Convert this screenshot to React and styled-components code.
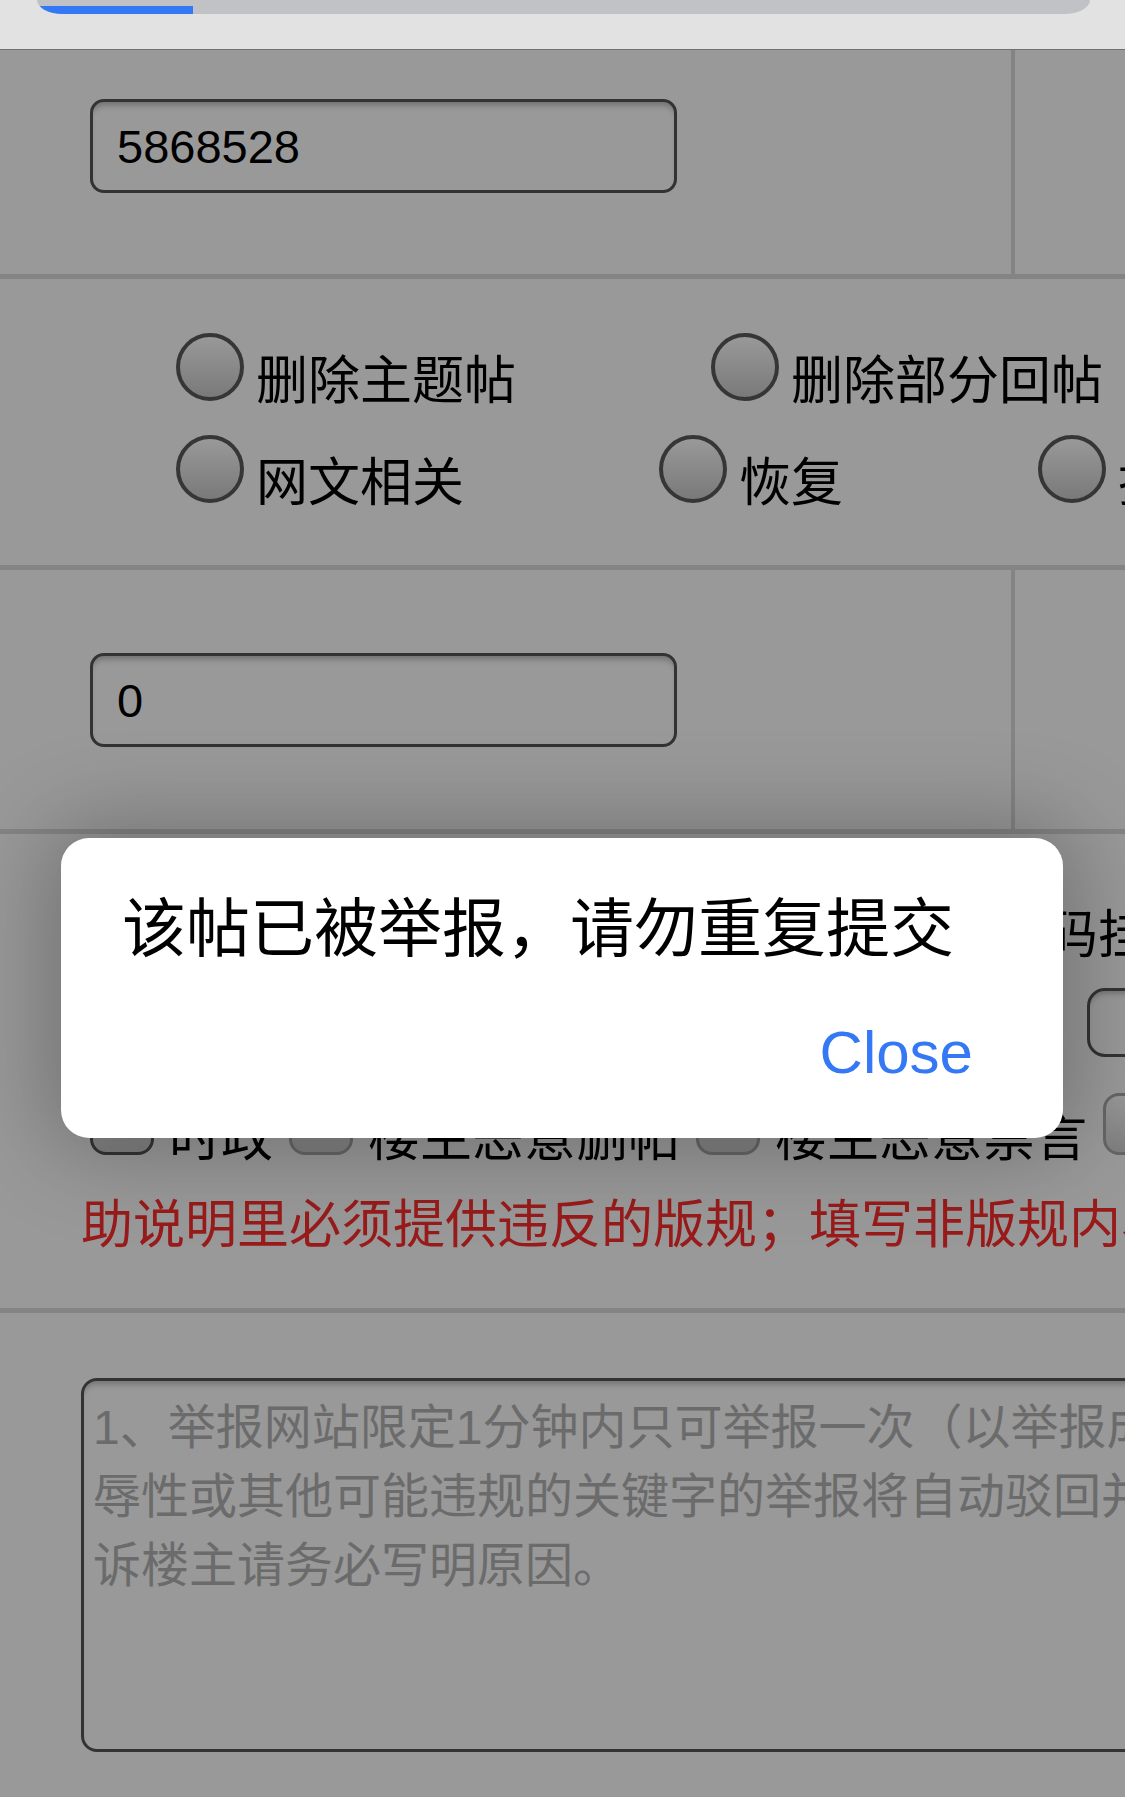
import styled, { createGlobalStyle } from "styled-components";

const GlobalStyle = createGlobalStyle`
  html, body {
    margin: 0;
    padding: 0;
    overflow: hidden;
    background: #e2e2e2;
  }
  body {
    font-family: "Noto Sans CJK SC", "Liberation Sans", sans-serif;
  }
`;

const TopBar = styled.div`
  height: 49px;
  background: #e2e2e2;
  border-bottom: 1px solid #707070;
`;

const UrlPill = styled.div`
  height: 14px;
  margin: 0 35px 0 37px;
  background: #c1c2c6;
  border-radius: 0 0 26px 26px / 0 0 14px 14px;
  overflow: hidden;
  display: flex;
  align-items: flex-end;
`;

const Progress = styled.div`
  height: 8px;
  background: #3478f6;
`;

const PageArea = styled.div`
  position: relative;
  height: 1747px;
  overflow: hidden;
  background: #fff;
`;

const Form = styled.div`
  width: 1400px;
  display: flex;
  flex-direction: column;
`;

const Row = styled.div`
  height: ${(p) => p.$h}px;
  border-bottom: ${(p) => (p.$last ? "none" : "5px solid #dcdcdc")};
  display: ${(p) => (p.$split ? "grid" : "block")};
  grid-template-columns: 1015px 1fr;
`;

const Cell = styled.div`
  padding: ${(p) => p.$top}px 0 0 90px;
  border-right: 4px solid #dcdcdc;
`;

const TextInput = styled.input`
  box-sizing: border-box;
  width: 587px;
  height: 94px;
  border: 3px solid #555;
  border-radius: 14px;
  padding: 0 0 0 24px;
  background: #fff;
  box-shadow: inset 0 7px 6px -4px rgba(0, 0, 0, 0.28);
  font-family: "Liberation Sans", sans-serif;
  font-size: 47px;
  color: #000;
  outline: none;
`;

const RadioGroup = styled.div`
  display: flex;
  flex-wrap: wrap;
  column-gap: 195px;
  row-gap: 32px;
  padding: 54px 0 0 176px;
`;

const OptionItem = styled.label`
  display: flex;
  align-items: flex-start;
  gap: ${(p) => p.$gap}px;
`;

const RadioMark = styled.input.attrs({ type: "radio" })`
  appearance: none;
  margin: 0;
  flex: none;
  width: 68px;
  height: 68px;
  border-radius: 50%;
  border: 4px solid #5a5a5a;
  box-sizing: border-box;
  background: linear-gradient(#ffffff, #cbcbcb);
`;

const CheckMark = styled.input.attrs({ type: "checkbox" })`
  appearance: none;
  margin: 0;
  flex: none;
  width: 64px;
  height: 62px;
  border-radius: 16px;
  border: 3px solid ${(p) => (p.$dark ? "#555" : "#aaa")};
  box-sizing: border-box;
  background: linear-gradient(#ffffff, #d4d4d4);
`;

const OptionText = styled.span`
  font-size: 52px;
  line-height: 52px;
  color: #000;
  white-space: nowrap;
  margin-top: ${(p) => p.$top}px;
`;

const ReportBlock = styled.div`
  display: flex;
  flex-direction: column;
  align-items: flex-start;
  padding-left: 81px;
`;

const LineText = styled.div`
  margin-top: ${(p) => p.$top}px;
  margin-left: ${(p) => p.$indent || 0}px;
  font-size: 52px;
  line-height: 52px;
  white-space: nowrap;
  color: ${(p) => p.$color || "#000"};
`;

const FieldLine = styled.div`
  display: flex;
  align-items: center;
  gap: 12px;
  margin-top: 31px;
`;

const FieldLabel = styled.span`
  flex: 0 0 994px;
  font-size: 52px;
  line-height: 52px;
  white-space: nowrap;
  overflow: hidden;
`;

const SmallInput = styled.input`
  box-sizing: border-box;
  width: 400px;
  height: 69px;
  border: 3px solid #555;
  border-radius: 18px;
  background: #fff;
  box-shadow: inset 0 6px 6px -4px rgba(0, 0, 0, 0.28);
  outline: none;
`;

const CheckLine = styled.div`
  display: flex;
  align-items: flex-start;
  gap: 16px;
  margin: 36px 0 0 9px;
`;

const ReasonArea = styled.textarea`
  display: block;
  box-sizing: border-box;
  width: 1300px;
  height: 374px;
  margin: 65px 0 0 81px;
  padding: 12px 9px;
  border: 3px solid #555;
  border-radius: 16px;
  background: #fff;
  box-shadow: inset 0 7px 6px -4px rgba(0, 0, 0, 0.25);
  font-family: "Liberation Sans", "Noto Sans CJK SC", sans-serif;
  font-size: 48px;
  line-height: 69px;
  resize: none;
  outline: none;
  white-space: pre;
  &::placeholder {
    color: #b3b3b3;
    font-family: "Liberation Sans", "Noto Sans CJK SC", sans-serif;
  }
`;

const Overlay = styled.div`
  position: absolute;
  inset: 0;
  background: rgba(0, 0, 0, 0.4);
`;

const Dialog = styled.div`
  position: absolute;
  top: 788px;
  left: 61px;
  width: 1002px;
  box-sizing: border-box;
  padding: 47px 90px 49px 61px;
  background: #fff;
  border-radius: 28px;
  box-shadow: 0 0 90px 14px rgba(0, 0, 0, 0.26);
`;

const DialogMessage = styled.div`
  font-size: 64px;
  line-height: 76px;
  color: #000;
  white-space: nowrap;
`;

const DialogActions = styled.div`
  display: flex;
  justify-content: flex-end;
  margin-top: 56px;
`;

const CloseButton = styled.button`
  background: none;
  border: 0;
  padding: 0;
  font-family: "Liberation Sans", sans-serif;
  font-size: 60px;
  line-height: 72px;
  color: #3478f6;
`;

const radios = [
  "删除主题帖",
  "删除部分回帖",
  "网文相关",
  "恢复",
  "投诉楼主",
];

const checks = [
  { label: "时政", dark: true },
  { label: "楼主恶意删帖" },
  { label: "楼主恶意禁言" },
  { label: "其他" },
];

const placeholder =
  "1、举报网站限定1分钟内只可举报一次（以举报成功为准）；2、含有侮\n" +
  "辱性或其他可能违规的关键字的举报将自动驳回并封禁；3、投\n" +
  "诉楼主请务必写明原因。";

export default function App() {
  return (
    <>
      <GlobalStyle />
      <TopBar>
        <UrlPill>
          <Progress style={{ width: 156 }} />
        </UrlPill>
      </TopBar>
      <PageArea>
        <Form>
          <Row $h={224} $split>
            <Cell $top={49}>
              <TextInput value="5868528" readOnly />
            </Cell>
            <div />
          </Row>
          <Row $h={286}>
            <RadioGroup>
              {radios.map((r) => (
                <OptionItem key={r} $gap={12}>
                  <RadioMark name="action" />
                  <OptionText $top={18}>{r}</OptionText>
                </OptionItem>
              ))}
            </RadioGroup>
          </Row>
          <Row $h={259} $split>
            <Cell $top={83}>
              <TextInput value="0" readOnly />
            </Cell>
            <div />
          </Row>
          <Row $h={474}>
            <ReportBlock>
              <LineText $top={71} $indent={26}>
                举报原因（选1项）：盗号、钓鱼、恶意代码挂马
              </LineText>
              <FieldLine>
                <FieldLabel>详细说明（请注明违规楼层与具体内容）：</FieldLabel>
                <SmallInput readOnly />
              </FieldLine>
              <CheckLine>
                {checks.map((c) => (
                  <OptionItem key={c.label} $gap={15}>
                    <CheckMark $dark={c.dark} />
                    <OptionText $top={15}>{c.label}</OptionText>
                  </OptionItem>
                ))}
              </CheckLine>
              <LineText $top={35} $color="#ff2d2d">
                助说明里必须提供违反的版规；填写非版规内容将不予处理
              </LineText>
            </ReportBlock>
          </Row>
          <Row $h={500} $last>
            <ReasonArea placeholder={placeholder} readOnly />
          </Row>
        </Form>
        <Overlay />
        <Dialog>
          <DialogMessage>该帖已被举报，请勿重复提交</DialogMessage>
          <DialogActions>
            <CloseButton>Close</CloseButton>
          </DialogActions>
        </Dialog>
      </PageArea>
    </>
  );
}
